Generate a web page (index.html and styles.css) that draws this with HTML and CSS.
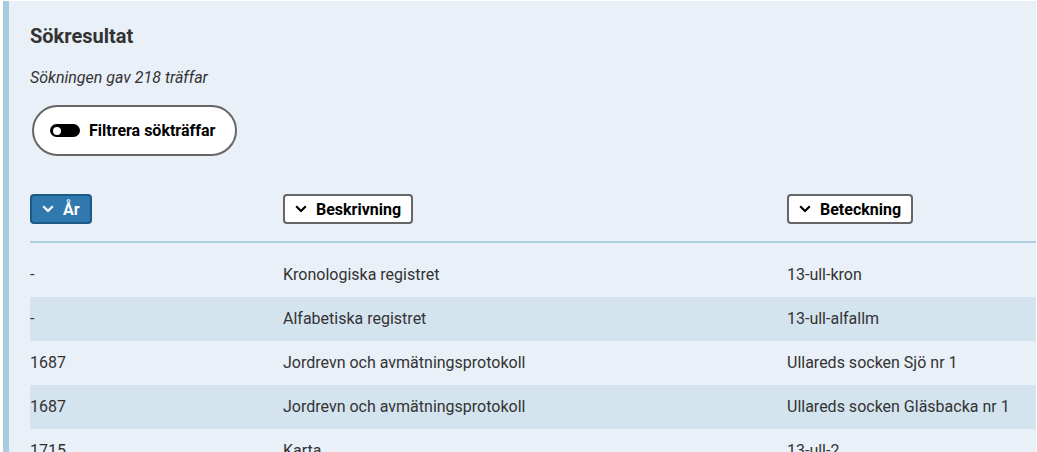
FILE: index.html
```html
<!DOCTYPE html>
<html lang="sv">
<head>
<meta charset="utf-8">
<link rel="stylesheet" href="styles.css">
</head>
<body>
<section class="panel">
  <h2 class="title">Sökresultat</h2>
  <p class="summary">Sökningen gav 218 träffar</p>
  <button class="filter-btn" type="button">
    <span class="toggle"><span class="knob"></span></span>
    <span>Filtrera sökträffar</span>
  </button>
  <div class="table">
    <div class="thead">
      <div class="th"><button class="sort-btn active" type="button"><svg class="chev" viewBox="0 0 12 8" width="12" height="8"><path d="M1.2 1.3 L6 6 L10.8 1.3" fill="none" stroke="currentColor" stroke-width="2.2"/></svg>År</button></div>
      <div class="th"><button class="sort-btn" type="button"><svg class="chev" viewBox="0 0 12 8" width="12" height="8"><path d="M1.2 1.3 L6 6 L10.8 1.3" fill="none" stroke="currentColor" stroke-width="2.2"/></svg>Beskrivning</button></div>
      <div class="th"><button class="sort-btn" type="button"><svg class="chev" viewBox="0 0 12 8" width="12" height="8"><path d="M1.2 1.3 L6 6 L10.8 1.3" fill="none" stroke="currentColor" stroke-width="2.2"/></svg>Beteckning</button></div>
    </div>
    <div class="tbody">
      <div class="tr"><div class="td">-</div><div class="td">Kronologiska registret</div><div class="td">13-ull-kron</div></div>
      <div class="tr"><div class="td">-</div><div class="td">Alfabetiska registret</div><div class="td">13-ull-alfallm</div></div>
      <div class="tr"><div class="td">1687</div><div class="td">Jordrevn och avmätningsprotokoll</div><div class="td">Ullareds socken Sjö nr 1</div></div>
      <div class="tr"><div class="td">1687</div><div class="td">Jordrevn och avmätningsprotokoll</div><div class="td">Ullareds socken Gläsbacka nr 1</div></div>
      <div class="tr"><div class="td">1715</div><div class="td">Karta</div><div class="td">13-ull-2</div></div>
    </div>
  </div>
</section>
</body>
</html>
```

FILE: styles.css
```css
html, body {
  margin: 0;
  padding: 0;
  background: #ffffff;
  overflow: hidden;
}
body {
  font-family: Roboto, "Liberation Sans", sans-serif;
  color: #333333;
}
.panel {
  margin: 1px 0 0 3px;
  width: 1033px;
  height: 460px;
  background: #e9f0f7;
  border-left: 6px solid #a9cbe0;
  padding: 22px 0 0 21px;
  box-sizing: border-box;
  overflow: hidden;
}
.title {
  margin: 0;
  font-size: 20px;
  font-weight: 700;
  line-height: 26px;
  color: #333333;
}
.summary {
  margin: 18px 0 0;
  font-size: 16px;
  font-style: italic;
  line-height: 22px;
  color: #333333;
}
.filter-btn {
  margin: 16px 0 0 2px;
  display: flex;
  align-items: center;
  gap: 9px;
  height: 51px;
  padding: 0 20px 0 16px;
  border: 2px solid #666666;
  border-radius: 26px;
  background: #ffffff;
  font-family: inherit;
  font-size: 16px;
  font-weight: 700;
  color: #000000;
}
.toggle {
  width: 30px;
  height: 13px;
  border-radius: 7px;
  background: #000000;
  display: flex;
  align-items: center;
  padding-left: 3px;
  box-sizing: border-box;
}
.knob {
  width: 8px;
  height: 8px;
  border-radius: 50%;
  background: #ffffff;
}
.table {
  margin-top: 38px;
  width: 1100px;
}
.thead {
  display: grid;
  grid-template-columns: 253px 504px 1fr;
  padding-bottom: 17px;
  border-bottom: 2px solid #aecde2;
}
.th {
  display: flex;
}
.sort-btn {
  display: flex;
  align-items: center;
  gap: 9px;
  height: 30px;
  padding: 0 10px 0 10px;
  border: 2px solid #666666;
  border-radius: 4px;
  background: #ffffff;
  font-family: inherit;
  font-size: 16px;
  font-weight: 700;
  color: #000000;
}
.sort-btn.active {
  background: #2f79af;
  border-color: #1d5a87;
  color: #ffffff;
}
.tbody {
  padding-top: 10px;
}
.tr {
  display: grid;
  grid-template-columns: 253px 504px 1fr;
  height: 44px;
  align-items: center;
  font-size: 16px;
  color: #333333;
}
.tr:nth-child(even) {
  background: #d4e4ef;
}
.td {
  padding-bottom: 2px;
}
```
